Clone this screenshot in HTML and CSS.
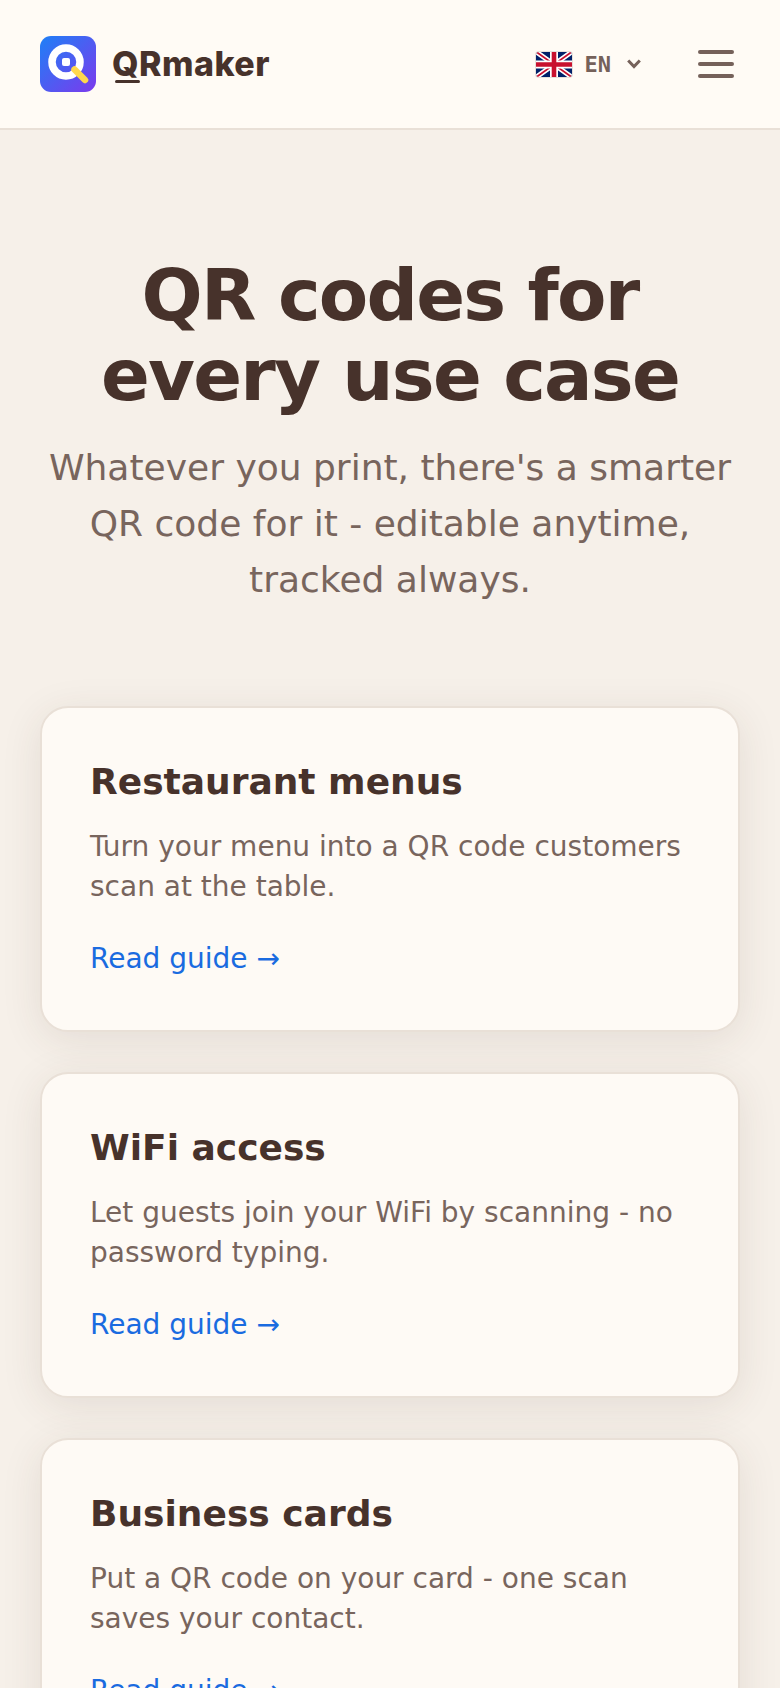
FILE: index.html
```html
<!DOCTYPE html>
<html lang="en">
<head>
<meta charset="utf-8">
<title>QRmaker</title>
<link rel="stylesheet" href="styles.css">
</head>
<body>
<header class="topbar">
  <a class="brand" href="#">
    <svg class="brand-icon" width="56" height="56" viewBox="0 0 56 56">
      <defs><linearGradient id="lg" x1="0" y1="0" x2="1" y2="1"><stop offset="0" stop-color="#1e80f6"/><stop offset="1" stop-color="#7c3aed"/></linearGradient></defs>
      <rect width="56" height="56" rx="11" fill="url(#lg)"/>
      <circle cx="26" cy="26" r="14" fill="none" stroke="#fff" stroke-width="7.5"/>
      <rect x="22" y="22" width="8" height="8" rx="2" fill="#fff"/>
      <path d="M34.5 33.5 45 44" stroke="#ffd84d" stroke-width="6.5" stroke-linecap="round"/>
    </svg>
    <span class="brand-name"><span class="brand-q">Q</span>Rmaker</span>
  </a>
  <div class="tools">
    <button class="lang">
      <svg class="flag" width="38" height="27" viewBox="0 0 38 27">
        <defs><clipPath id="fc"><rect x="1" y="1" width="36" height="25" rx="3"/></clipPath></defs>
        <rect width="38" height="27" rx="4" fill="#e6e0da"/>
        <g clip-path="url(#fc)">
          <rect width="38" height="27" fill="#012169"/>
          <path d="M0 0 38 27M38 0 0 27" stroke="#fff" stroke-width="5"/>
          <path d="M0 0 38 27M38 0 0 27" stroke="#c8102e" stroke-width="1.8"/>
          <path d="M19 0V27M0 13.5H38" stroke="#fff" stroke-width="8"/>
          <path d="M19 0V27M0 13.5H38" stroke="#c8102e" stroke-width="4.6"/>
        </g>
      </svg>
      <span class="lang-code">EN</span>
      <svg class="chev" width="14" height="10" viewBox="0 0 14 10"><path d="M1.2 1.5 7 7.5 12.8 1.5" fill="none" stroke="#75615a" stroke-width="3"/></svg>
    </button>
    <button class="menu" aria-label="Menu"><span></span><span></span><span></span></button>
  </div>
</header>
<main class="page">
  <section class="hero">
    <h1>QR codes for<br>every use case</h1>
    <p>Whatever you print, there's a smarter QR code for it - editable anytime, tracked always.</p>
  </section>
  <section class="cards">
    <article class="card">
      <h2>Restaurant menus</h2>
      <p>Turn your menu into a QR code customers scan at the table.</p>
      <a href="#">Read guide →</a>
    </article>
    <article class="card">
      <h2>WiFi access</h2>
      <p>Let guests join your WiFi by scanning - no password typing.</p>
      <a href="#">Read guide →</a>
    </article>
    <article class="card">
      <h2>Business cards</h2>
      <p>Put a QR code on your card - one scan saves your contact.</p>
      <a href="#">Read guide →</a>
    </article>
  </section>
</main>
</body>
</html>
```
FILE: styles.css
```css
* { box-sizing: border-box; }
html, body { margin: 0; padding: 0; }
body {
  height: 1688px;
  overflow: hidden;
  background: #f6f0e9;
  font-family: "DejaVu Sans", sans-serif;
  color: #47322b;
}
.topbar {
  height: 130px;
  background: #fffbf5;
  border-bottom: 2px solid #e9e0d7;
  display: flex;
  align-items: center;
  justify-content: space-between;
  padding: 0 46px 0 40px;
}
.brand {
  display: flex;
  align-items: center;
  gap: 16px;
  text-decoration: none;
  color: #47322b;
}
.brand-icon { display: block; }
.brand-name {
  font-family: Inter, sans-serif;
  font-weight: 800;
  font-size: 34px;
  letter-spacing: 0.45px;
  margin-top: -2px;
}
.brand-q { position: relative; }
.brand-q::after {
  content: "";
  position: absolute;
  left: 3px;
  right: -1px;
  bottom: 1px;
  height: 3px;
  border-radius: 2px;
  background: #47322b;
}
.tools { display: flex; align-items: center; gap: 57px; }
.lang {
  display: flex;
  align-items: center;
  border: 0;
  padding: 0;
  background: none;
  font-family: inherit;
}
.flag { display: block; margin-right: 12px; }
.lang-code {
  font-family: "DejaVu Sans Mono", monospace;
  font-size: 22px;
  font-weight: 700;
  color: #75615a;
  margin-right: 16px;
}
.chev { display: block; }
.menu {
  display: flex;
  flex-direction: column;
  gap: 8px;
  width: 36px;
  border: 0;
  padding: 0;
  background: none;
}
.menu span {
  display: block;
  height: 4px;
  width: 36px;
  border-radius: 2px;
  background: #75615a;
}
.page { padding: 125px 40px 0; }
.hero { text-align: center; }
.hero h1 {
  margin: 0;
  font-size: 72px;
  line-height: 80px;
  font-weight: 700;
  letter-spacing: -1.8px;
}
.hero p {
  margin: 25px 0 0;
  font-size: 36px;
  line-height: 56px;
  color: #78655d;
}
.cards {
  margin-top: 98px;
  display: flex;
  flex-direction: column;
  gap: 40px;
}
.card {
  height: 326px;
  padding: 50px 48px 0;
  background: #fefaf5;
  border: 2px solid #e9e0d7;
  border-radius: 28px;
  box-shadow: 0 8px 40px rgba(71, 50, 43, 0.1);
}
.card h2 {
  margin: 0;
  font-size: 36px;
  line-height: 47px;
  font-weight: 700;
}
.card p {
  margin: 22px 0 0;
  font-size: 28px;
  line-height: 40px;
  color: #78655d;
}
.card a {
  display: block;
  margin-top: 32px;
  font-size: 28px;
  line-height: 40px;
  color: #1a6be0;
  text-decoration: none;
}
```
